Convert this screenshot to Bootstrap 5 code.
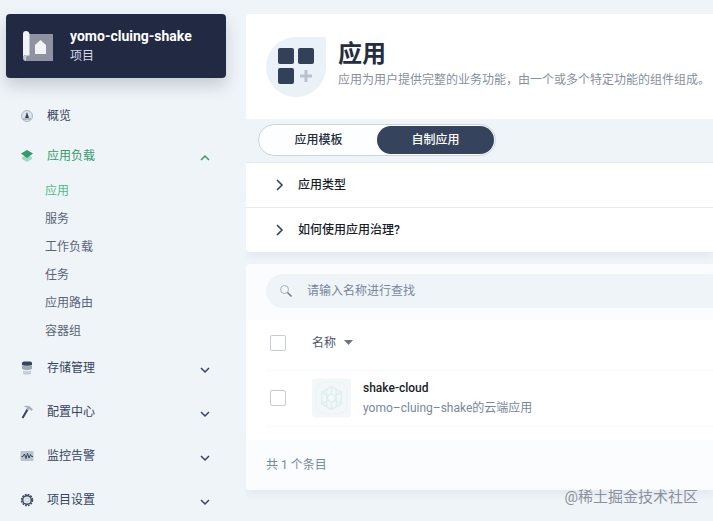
<!DOCTYPE html>
<html lang="zh-CN">
<head>
<meta charset="utf-8">
<meta name="viewport" content="width=device-width, initial-scale=1">
<title>应用</title>
<link rel="stylesheet" href="https://cdn.jsdelivr.net/npm/bootstrap@5.3.0/dist/css/bootstrap.min.css">
<style>
body{background:#eff4f9;color:#242e42;font-family:Roboto,"Noto Sans CJK SC",sans-serif;font-size:12px;line-height:20px;overflow-x:hidden}
a{color:inherit;text-decoration:none}
.shell{padding:14px 0 0 6px;gap:20px}
.side{width:220px}
.project{background:#222943;border-radius:4px;height:64px;padding:0 16px;gap:16px;box-shadow:0 8px 16px rgba(36,46,66,.2);margin-bottom:18px}
.project strong{font-size:14px;font-weight:700}
.project small{font-size:12px;color:#d5dbe6}
.menu-row{width:100%;height:44px;padding:0 14px;border:0;background:none;color:#36435c;gap:13px;text-align:left}
.menu-row.compact{height:40px}
.menu-row .chev{margin:4px 0 0 auto}
.menu-row.on{color:#369a6a}
.submenu{padding:1px 0 1px 39px}
.submenu a{display:block;line-height:28px;color:#5a6478}
.submenu a.on{color:#55bc8a}
.panel{border-radius:4px 0 0 4px;box-shadow:0 4px 8px rgba(36,46,66,.06);overflow:hidden}
.intro{height:105px;padding:0 0 0 20px;gap:12px}
.intro h1{font-size:24px;font-weight:700;line-height:32px;color:#242e42}
.intro-text{padding-bottom:6px}
.muted{color:#79879c}
.intro p{color:#868f9e}
.tabs-band{background:#eff4f9;padding:5px 12px 6px}
.switcher{height:32px;width:238px;padding:1px;border:1px solid #ccd3db;border-radius:16px;background:#fdfeff}
.switcher button{border:0;border-radius:14px;background:none;color:#242e42;font-weight:500}
.switcher button.active{background:#36435c;color:#fff}
.fold{width:100%;height:45px;padding:0 28px;gap:12px;border:0;border-top:1px solid #e3e9ef;background:#fff;color:#181d28;font-weight:500}
.listing{margin-top:12px}
.tools{background:#fbfcfe;padding:10px 0 12px 20px}
.search{height:34px;border-radius:17px 0 0 17px;background:#eff4f9;padding:0 12px;gap:13px}
.search input{background:none;border:0;outline:0;color:#242e42;font-size:12px}
.search input::placeholder{color:#79879c;opacity:1}
.apps{margin:0 0 0 20px;width:calc(100% - 20px)}
.apps th{height:50px;padding-bottom:4px;font-weight:400;color:#4a5670;border-bottom:1px solid #f6f8fa}
.apps td{height:56px;border-bottom:1px solid #f6f8fa}
.apps .pick{width:45px;padding-left:4px}
.tick{appearance:none;display:block;width:16px;height:16px;margin:0;border:1px solid #c6ccd3;border-radius:2px;background:#fff}
.tick:checked{background:#36435c}
.sort{border:0;background:none;padding:0;color:#4a5670}
.listing footer{margin-top:13px;padding:15px 20px;background:#fafcfe}
.app-name{font-weight:500;color:#181d28}
.stamp{position:absolute;right:15px;bottom:12px;font-size:15px;line-height:24px;color:#8b919a}
</style>
<script src="https://cdn.jsdelivr.net/npm/bootstrap@5.3.0/dist/js/bootstrap.bundle.min.js"></script>
</head>
<body>
<div class="shell d-flex align-items-start">
<aside class="side flex-shrink-0">
  <a href="#" class="project d-flex align-items-center text-white">
    <svg width="32" height="32" viewBox="0 0 32 32"><path fill="#8e92a1" d="M7 4H31V31H3V25H7z"/><path fill="#f0f3fa" d="M1 4Q1 1 4 1T7.500 4V25H4Q1 25 1 29z"/><path fill="#c3c7d1" d="M1 28Q1 25 4 25H7.500V26H5Q4 26 4 31Q1 31 1 28z"/><path fill="#f0f3fa" d="M18.500 10L24 15V24H13V15z"/></svg>
    <span class="d-flex flex-column"><strong>yomo-cluing-shake</strong><small>项目</small></span>
  </a>
  <nav>
    <a href="#" class="menu-row compact d-flex align-items-center">
      <svg width="14" height="14" viewBox="0 0 14 14"><circle cx="7" cy="7" r="5.500" fill="#dce3eb" stroke="#aeb8c5"/><path fill="#36435c" d="M7 3L9 9H5z"/><path stroke="#8996a7" d="M3 10H11"/></svg>概览</a>
    <button type="button" class="menu-row compact on d-flex align-items-center" aria-expanded="true">
      <svg width="14" height="14" viewBox="0 0 14 14"><path fill="#a2dbc0" d="M2 8L7 6L12 8V10L7 13L2 10z"/><path fill="#329b6b" d="M7 1L13 4.500L7 9L1 4.500z"/></svg>应用负载
      <svg class="chev" width="14" height="14" viewBox="0 0 14 14" fill="none" stroke="currentColor" stroke-width="1.500"><path d="M3 9L7 5L11 9"/></svg></button>
    <div class="submenu"><a href="#" class="on">应用</a><a href="#">服务</a><a href="#">工作负载</a><a href="#">任务</a><a href="#">应用路由</a><a href="#">容器组</a></div>
    <button type="button" class="menu-row d-flex align-items-center">
      <svg width="14" height="14" viewBox="0 0 14 14"><path fill="#c5cdd7" d="M3 5H11V13Q7 14.500 3 13z"/><path fill="#9fa9b7" d="M2 4.500H12V8Q7 10 2 8z"/><path stroke="#eff4f9" d="M2 9Q7 11 12 9" fill="none"/><path fill="#36435c" d="M2 2Q2 .5 4 .5H10Q12 .5 12 2V4Q7 5.500 2 4z"/></svg>存储管理
      <svg class="chev" width="14" height="14" viewBox="0 0 14 14" fill="none" stroke="currentColor" stroke-width="1.500"><path d="M3 5L7 9L11 5"/></svg></button>
    <button type="button" class="menu-row d-flex align-items-center">
      <svg width="14" height="14" viewBox="0 0 14 14" fill="none"><path stroke="#36435c" stroke-width="2" d="M7.500 4.500L2.500 13"/><path fill="#a7b0bc" d="M3.500 1.500Q7 0 10 1.500L13 4.500L11.500 6L9.500 4L8.500 5L6.500 4L7 2.500Q5.500 1.800 3.500 1.500z"/></svg>配置中心
      <svg class="chev" width="14" height="14" viewBox="0 0 14 14" fill="none" stroke="currentColor" stroke-width="1.500"><path d="M3 5L7 9L11 5"/></svg></button>
    <button type="button" class="menu-row d-flex align-items-center">
      <svg width="14" height="14" viewBox="0 0 14 14"><rect x=".5" y="2" width="13" height="10" rx="1" fill="#b9c4cf"/><path fill="none" stroke="#36435c" d="M1.500 7.500H3L4.500 5L6 9.500L7.500 4.500L9 9L10.500 5.500L11.500 7.500H13"/></svg>监控告警
      <svg class="chev" width="14" height="14" viewBox="0 0 14 14" fill="none" stroke="currentColor" stroke-width="1.500"><path d="M3 5L7 9L11 5"/></svg></button>
    <button type="button" class="menu-row d-flex align-items-center">
      <svg width="14" height="14" viewBox="0 0 14 14" fill="none"><circle cx="7" cy="7" r="5.500" stroke="#36435c" stroke-width="1.500" stroke-dasharray="1.728 1.152"/><circle cx="7" cy="7" r="4.300" stroke="#36435c" stroke-width="1.400"/><circle cx="7" cy="7" r="2" stroke="#b7c0cc"/></svg>项目设置
      <svg class="chev" width="14" height="14" viewBox="0 0 14 14" fill="none" stroke="currentColor" stroke-width="1.500"><path d="M3 5L7 9L11 5"/></svg></button>
  </nav>
</aside>
<main class="flex-grow-1 overflow-hidden pb-4">
  <section class="panel bg-white">
    <header class="intro d-flex align-items-center">
      <svg class="flex-shrink-0" width="60" height="60" viewBox="0 0 60 60"><path fill="#eaf1f7" d="M30 0H60V30A30 30 0 1 1 30 0z"/><g fill="#324158"><rect x="12" y="11" width="16" height="16" rx="2"/><rect x="32" y="11" width="16" height="16" rx="2"/><rect x="12" y="31" width="16" height="16" rx="2"/></g><path stroke="#b9c2ce" stroke-width="3" d="M34 39H46M40 33V45"/></svg>
      <div class="intro-text text-nowrap"><h1 class="mb-0">应用</h1><p class="mb-0">应用为用户提供完整的业务功能，由一个或多个特定功能的组件组成。</p></div>
    </header>
    <div class="tabs-band">
      <div class="switcher d-flex"><button type="button" class="flex-fill">应用模板</button><button type="button" class="flex-fill active">自制应用</button></div>
    </div>
    <button type="button" class="fold d-flex align-items-center"><svg width="12" height="14" viewBox="0 0 12 14" fill="none" stroke="#36435c" stroke-width="1.600"><path d="M3 2L8 7L3 12"/></svg>应用类型</button>
    <button type="button" class="fold d-flex align-items-center"><svg width="12" height="14" viewBox="0 0 12 14" fill="none" stroke="#36435c" stroke-width="1.600"><path d="M3 2L8 7L3 12"/></svg>如何使用应用治理?</button>
  </section>
  <section class="panel listing bg-white">
    <div class="tools">
      <label class="search d-flex align-items-center"><svg width="16" height="16" viewBox="0 0 16 16" fill="none"><circle cx="6.500" cy="6.500" r="4" fill="#f5f8fb" stroke="#a5afbc"/><path stroke="#68758a" stroke-width="1.500" d="M9.500 9.500L13.500 13.500"/></svg>
      <input type="search" class="flex-grow-1 p-0" placeholder="请输入名称进行查找" aria-label="请输入名称进行查找"></label>
    </div>
    <table class="apps">
      <thead><tr><th class="pick"><input type="checkbox" class="tick" aria-label="全选"></th><th><button type="button" class="sort d-flex align-items-center gap-2">名称<svg width="9" height="6" viewBox="0 0 9 6"><path fill="#6b7586" d="M0 0H9L4.500 5z"/></svg></button></th></tr></thead>
      <tbody><tr><td class="pick"><input type="checkbox" class="tick" aria-label="shake-cloud"></td><td><div class="d-flex align-items-center gap-2">
        <svg class="me-1" width="39" height="40" viewBox="0 0 40 40" fill="none"><rect width="40" height="40" rx="3" fill="#f3f7f8"/><rect x="4" y="4" width="32" height="32" rx="9" stroke="#eaf4f4"/><g stroke="#deefed" stroke-width="1.500"><path d="M20 8L30 14V26L20 32L10 26V14z"/><path d="M20 8V32M10 14L30 26M30 14L10 26M15 11V29M25 11V29"/></g><circle cx="20" cy="20" r="4" fill="#f5faf9" stroke="#d5ebe9"/></svg>
        <div><a href="#" class="app-name d-block">shake-cloud</a><span class="muted d-block">yomo–cluing–shake的云端应用</span></div></div></td></tr></tbody>
    </table>
    <footer class="muted">共 1 个条目</footer>
  </section>
</main>
</div>
<div class="stamp">@稀土掘金技术社区</div>
</body>
</html>
